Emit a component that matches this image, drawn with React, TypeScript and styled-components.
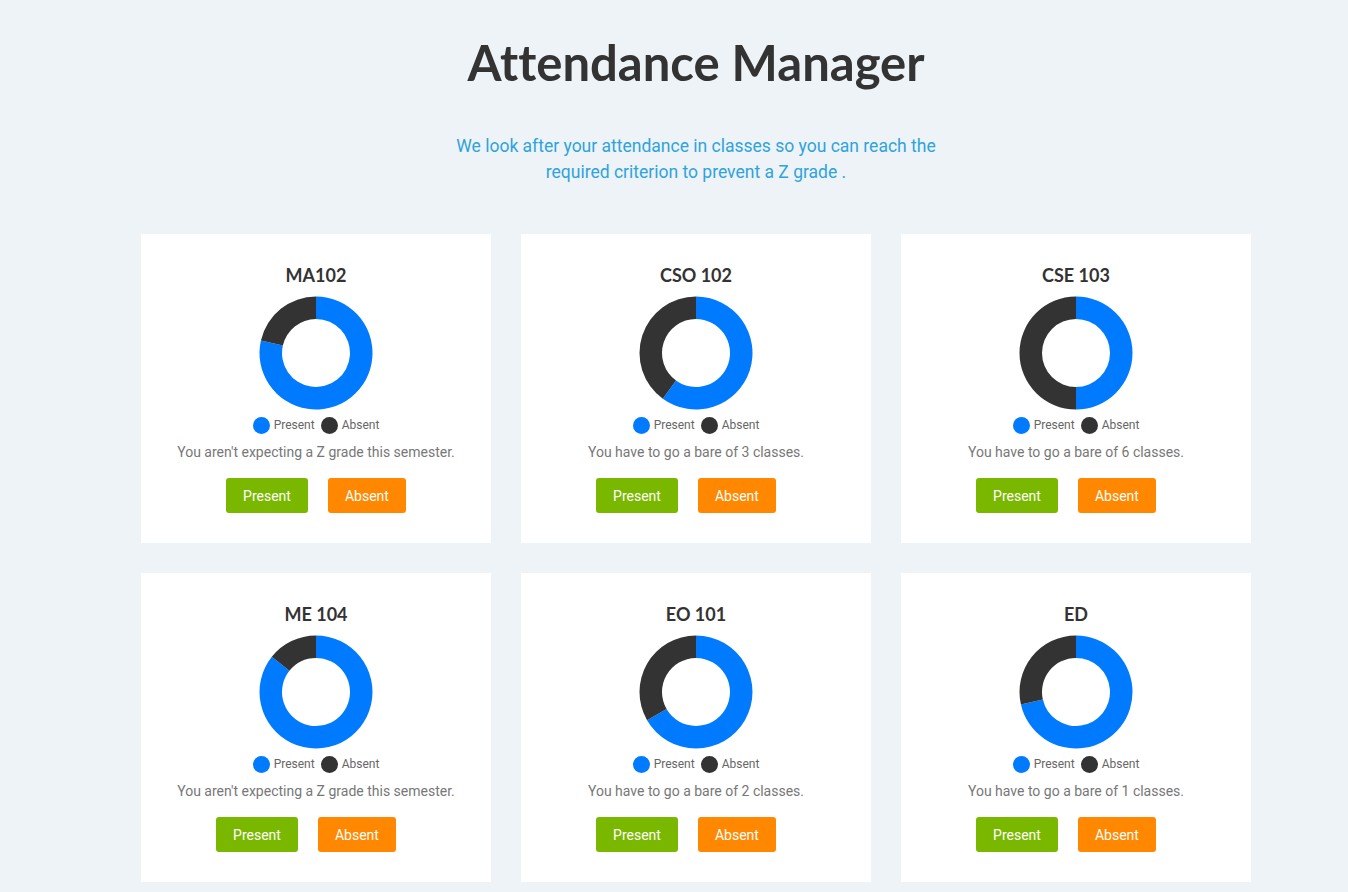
import styled, { createGlobalStyle } from 'styled-components'

const GlobalStyle = createGlobalStyle`
  html, body {
    margin: 0;
    padding: 0;
    background: #eef3f7;
    overflow: hidden;
  }
`

const Page = styled.main`
  box-sizing: border-box;
  min-height: 892px;
  padding: 0 0 40px 44px;
  font-family: Roboto, 'Liberation Sans', sans-serif;
  display: flex;
  flex-direction: column;
  align-items: center;
`

const Title = styled.h1`
  font-family: Lato, 'Liberation Sans', sans-serif;
  font-weight: 700;
  font-size: 49px;
  line-height: 62px;
  font-variant-ligatures: none;
  color: #333;
  margin: 31px 0 0;
`

const Lead = styled.p`
  width: 490px;
  margin: 40px 0 0;
  font-size: 17.5px;
  line-height: 26px;
  color: #2ea3dc;
  text-align: center;
`

const Grid = styled.section`
  display: grid;
  grid-template-columns: repeat(3, 350px);
  gap: 30px;
  margin-top: 49px;
`

const Card = styled.article`
  background: #fff;
  height: 309px;
  box-sizing: border-box;
  padding-top: 30px;
  display: flex;
  flex-direction: column;
  align-items: center;
`

const CourseName = styled.h2`
  font-family: Lato, 'Liberation Sans', sans-serif;
  font-weight: 700;
  font-size: 18px;
  line-height: 22px;
  color: #333;
  margin: 0;
`

const Chart = styled.svg`
  display: block;
  margin-top: 10px;
`

const Legend = styled.div`
  display: flex;
  align-items: center;
  gap: 6px;
  margin-top: 6px;
  font-size: 12px;
  line-height: 18px;
  color: #666;
`

const LegendItem = styled.span`
  display: flex;
  align-items: center;
  gap: 4px;
`

const Dot = styled.span<{ $color: string }>`
  width: 17px;
  height: 17px;
  border-radius: 50%;
  background: ${({ $color }) => $color};
`

const Message = styled.p`
  margin: 8px 0 0;
  font-size: 14px;
  line-height: 20px;
  color: #777;
`

const Actions = styled.div<{ $shift: boolean }>`
  display: flex;
  margin-top: 16px;
  transform: translateX(${({ $shift }) => ($shift ? '0' : '-10px')});
`

const Button = styled.button<{ $kind: 'present' | 'absent' }>`
  height: 35px;
  padding: 0 17px;
  margin-right: 20px;
  border: none;
  border-radius: 3px;
  font-family: Roboto, 'Liberation Sans', sans-serif;
  font-size: 14px;
  color: #fff;
  cursor: pointer;
  background: ${({ $kind }) => ($kind === 'present' ? '#7ab800' : '#ff8800')};
  &:last-child {
    margin-right: 0;
  }
`

const BLUE = '#007bff'
const DARK = '#333333'

const point = (cx: number, cy: number, r: number, frac: number) => {
  const a = frac * Math.PI * 2 - Math.PI / 2
  return [cx + r * Math.cos(a), cy + r * Math.sin(a)]
}

const arc = (from: number, to: number, ro: number, ri: number) => {
  const c = 57
  const big = to - from > 0.5 ? 1 : 0
  const [x1, y1] = point(c, c, ro, from)
  const [x2, y2] = point(c, c, ro, to)
  const [x3, y3] = point(c, c, ri, to)
  const [x4, y4] = point(c, c, ri, from)
  return `M${x1} ${y1} A${ro} ${ro} 0 ${big} 1 ${x2} ${y2} L${x3} ${y3} A${ri} ${ri} 0 ${big} 0 ${x4} ${y4} Z`
}

const Donut = ({ present, absent }: { present: number; absent: number }) => {
  const p = present / (present + absent)
  return (
    <Chart width={114} height={114} viewBox="0 0 114 114">
      <path d={arc(0, p, 56.5, 34)} fill={BLUE} />
      <path d={arc(p, 1, 56.5, 34)} fill={DARK} />
    </Chart>
  )
}

const courses = [
  { name: 'MA102', present: 11, absent: 3, bare: 0 },
  { name: 'CSO 102', present: 6, absent: 4, bare: 3 },
  { name: 'CSE 103', present: 5, absent: 5, bare: 6 },
  { name: 'ME 104', present: 6, absent: 1, bare: 0 },
  { name: 'EO 101', present: 6, absent: 3, bare: 2 },
  { name: 'ED', present: 5, absent: 2, bare: 1 },
]

const App = () => (
  <>
    <GlobalStyle />
    <Page>
      <Title>Attendance Manager</Title>
      <Lead>
        We look after your attendance in classes so you can reach the required criterion to
        prevent a Z grade .
      </Lead>
      <Grid>
        {courses.map((c, i) => (
          <Card key={c.name}>
            <CourseName>{c.name}</CourseName>
            <Donut present={c.present} absent={c.absent} />
            <Legend>
              <LegendItem>
                <Dot $color={BLUE} />
                Present
              </LegendItem>
              <LegendItem>
                <Dot $color={DARK} />
                Absent
              </LegendItem>
            </Legend>
            <Message>
              {c.bare === 0
                ? "You aren't expecting a Z grade this semester."
                : `You have to go a bare of ${c.bare} classes.`}
            </Message>
            <Actions $shift={i === 0}>
              <Button $kind="present">Present</Button>
              <Button $kind="absent">Absent</Button>
            </Actions>
          </Card>
        ))}
      </Grid>
    </Page>
  </>
)

export default App
